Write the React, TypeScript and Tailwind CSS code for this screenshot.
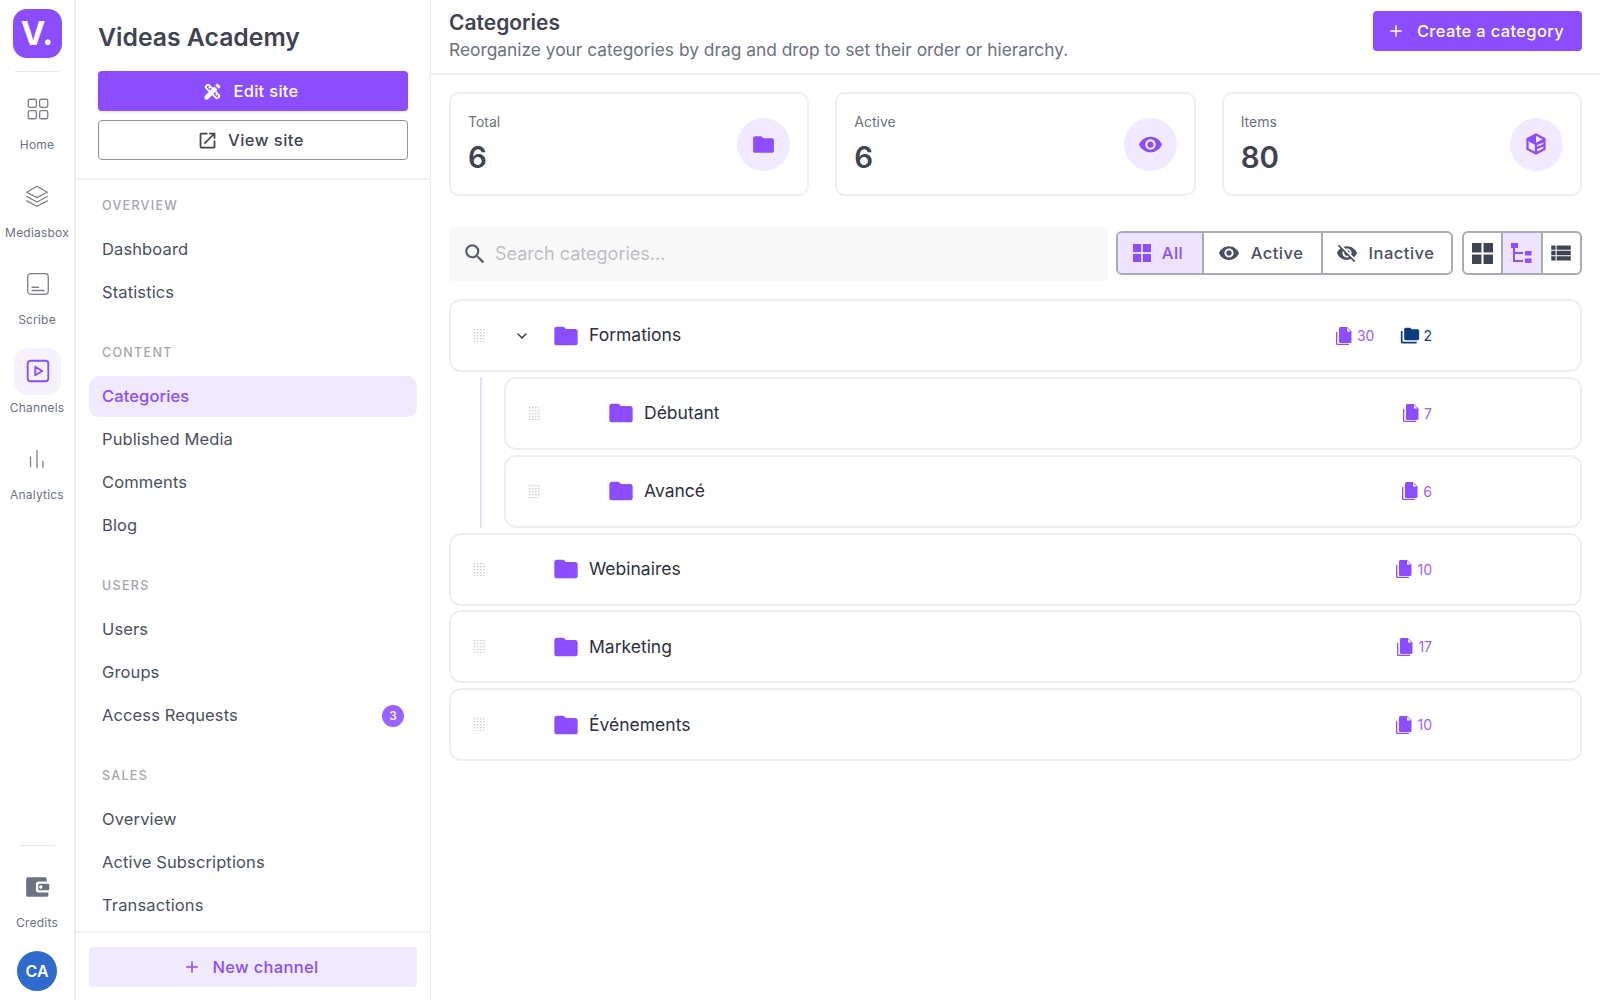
import type { ReactNode } from "react";
import {
  MdDesignServices,
  MdFolder,
  MdFolderCopy,
  MdOutlineOpenInNew,
  MdSearch,
  MdViewList,
  MdVisibility,
  MdVisibilityOff,
} from "react-icons/md";
import { Plus, ChevronDown } from "lucide-react";

const font = { fontFamily: "Inter, 'Liberation Sans', sans-serif" };

function RailIcon({ children }: { children: ReactNode }) {
  return (
    <svg width="26" height="26" viewBox="0 0 24 24" fill="none" stroke="currentColor" strokeWidth="1.2" strokeLinecap="round" strokeLinejoin="round">
      {children}
    </svg>
  );
}

function RailItem({ label, icon, active }: { label: string; icon: ReactNode; active?: boolean }) {
  return (
    <div className="flex h-[87.5px] flex-col items-center">
      <div className={`ml-px flex h-[47px] w-[47px] items-center justify-center rounded-[14px] ${active ? "bg-[#f5f1ff] text-[#8b4dff]" : "text-[#7b7e88]"}`}>{icon}</div>
      <span className="mt-[5px] text-[12px] leading-[16px] tracking-[0.2px] text-[#6b7280]">{label}</span>
    </div>
  );
}

function NavItem({ label, active, badge }: { label: string; active?: boolean; badge?: string }) {
  return (
    <div className={`flex h-[41px] items-center justify-between rounded-[10px] px-[13px] text-[16.5px] tracking-[0.12px] ${active ? "bg-[#f0e9ff] font-medium text-[#8b4dff]" : "text-[#4b5060]"}`}>
      <span>{label}</span>
      {badge && <span className="flex h-[22px] w-[22px] items-center justify-center rounded-full bg-[#9a62ff] text-[12px] font-medium text-white">{badge}</span>}
    </div>
  );
}

function NavGroup({ title, items }: { title: string; items: string[] }) {
  return (
    <div className="mb-[26px]">
      <div className="mb-[10px] h-[27px] px-[13px] text-[12.5px] font-medium leading-[27px] tracking-[1.3px] text-[#a3a5ad]">{title}</div>
      <div className="flex flex-col gap-[2px]">
        {items.map((item) => (
          <NavItem key={item} label={item} active={item === "Categories"} badge={item === "Access Requests" ? "3" : undefined} />
        ))}
      </div>
    </div>
  );
}

function StatCard({ label, value, icon }: { label: string; value: string; icon: ReactNode }) {
  return (
    <div className="flex h-[104px] flex-1 items-center justify-between rounded-[10px] border-2 border-[#eeeeef] pl-[17px] pr-[17px]">
      <div>
        <div className="text-[14px] leading-[20px] text-[#6b7280]">{label}</div>
        <div className="mt-[6px] text-[29.5px] font-semibold leading-[38px] text-[#404452]">{value}</div>
      </div>
      <div className="flex h-[53px] w-[53px] items-center justify-center rounded-full bg-[#f0e9ff] text-[#8b4dff]">{icon}</div>
    </div>
  );
}

function Grip() {
  return (
    <svg width="11" height="13" viewBox="0 0 11 13" fill="#cfd0d4">
      {[0, 3, 6, 9].map((x) => [0, 3, 6, 9, 12].map((y) => <rect key={`${x}-${y}`} x={x} y={y} width="1.6" height="1.4" />))}
    </svg>
  );
}

function DocsIcon() {
  return (
    <svg width="16" height="18" viewBox="0 0 16 18" className="text-[#8b4dff]">
      <path fill="currentColor" d="M0 5h1.300v11.700H13V18H1.500Q0 18 0 16.500z" />
      <path fill="currentColor" d="M4.200 0h6.800l4.500 4.500v10Q15.500 16 14 16H4.200Q3 16 3 14.500v-13Q3 0 4.200 0z" />
      <path fill="#fff" d="M11 1v3.500h3.500z" />
    </svg>
  );
}

function Row({ name, count, sub, expanded }: { name: string; count: string; sub?: string; expanded?: boolean }) {
  return (
    <div className="flex h-[73px] items-center rounded-[12px] border-2 border-[#eeeeef] pl-[23px] pr-[148px]">
      <Grip />
      <div className="ml-[29px] flex w-[41px] items-center text-[#2d3140]">{expanded && <ChevronDown size={16} strokeWidth={2} />}</div>
      <MdFolder size={28} className="-ml-[3px] text-[#8b4dff]" />
      <span className="ml-[9px] text-[17.5px] text-[#2d3140]">{name}</span>
      <div className="ml-auto flex items-center gap-[26px] text-[14px]">
        <div className="flex items-center gap-[5px] text-[#9a62ff]">
          <DocsIcon />
          <span>{count}</span>
        </div>
        {sub && (
          <div className="flex items-center gap-[3px] text-[#0b3b80]">
            <MdFolderCopy size={20} />
            <span>{sub}</span>
          </div>
        )}
      </div>
    </div>
  );
}

function Segment({ icon, label, active, width }: { icon: ReactNode; label: string; active?: boolean; width: string }) {
  return (
    <div className={`flex h-full items-center justify-center gap-[11px] border-r-2 border-[#a9abb2] pr-[4px] text-[16.5px] font-medium tracking-[0.5px] last:border-r-0 ${width} ${active ? "bg-[#ede3ff] text-[#8b4dff]" : "text-[#4b5060]"}`}>
      {icon}
      <span>{label}</span>
    </div>
  );
}

function Squares({ size }: { size: number }) {
  return (
    <svg width={size} height={size} viewBox="0 0 20 20" fill="currentColor">
      <rect x="0" y="0" width="9" height="9" />
      <rect x="11" y="0" width="9" height="9" />
      <rect x="0" y="11" width="9" height="9" />
      <rect x="11" y="11" width="9" height="9" />
    </svg>
  );
}

function TreeIcon() {
  return (
    <svg width="24" height="24" viewBox="0 0 24 24" fill="currentColor">
      <rect x="1" y="2" width="7" height="5" />
      <rect x="3" y="7" width="2" height="14" />
      <rect x="3" y="11" width="10" height="2" />
      <rect x="3" y="19" width="10" height="2" />
      <rect x="15" y="10" width="6.500" height="4.500" />
      <rect x="15" y="17.500" width="6.500" height="4.500" />
    </svg>
  );
}

export default function App() {
  return (
    <div className="flex h-[1000px] w-[1600px] overflow-hidden bg-white" style={font}>
      {/* icon rail */}
      <aside className="flex w-[76px] shrink-0 flex-col items-center border-r-2 border-[#ececee]">
        <div className="mt-[9px] flex h-[49px] w-[49px] items-center justify-center rounded-[14px] bg-[#8b4dff] text-[33px] font-bold text-white">V.</div>
        <div className="mb-[13px] mt-[13px] h-px w-[45px] bg-[#e5e5e8]" />
        <RailItem
          label="Home"
          icon={
            <RailIcon>
              <rect x="3" y="3" width="7.500" height="7.500" rx="1.500" />
              <rect x="13.500" y="3" width="7.500" height="7.500" rx="1.500" />
              <rect x="3" y="13.500" width="7.500" height="7.500" rx="1.500" />
              <rect x="13.500" y="13.500" width="7.500" height="7.500" rx="1.500" />
            </RailIcon>
          }
        />
        <RailItem
          label="Mediasbox"
          icon={
            <RailIcon>
              <path d="M12 3 2.500 8.500 12 13.500l9.500-5z" />
              <path d="m2.500 12.500 9.500 5 9.500-5" />
              <path d="m2.500 16.500 9.500 5 9.500-5" />
            </RailIcon>
          }
        />
        <RailItem
          label="Scribe"
          icon={
            <RailIcon>
              <rect x="2.500" y="2.500" width="19" height="19" rx="3" />
              <path d="M6.500 15h6M6.500 18h11" />
            </RailIcon>
          }
        />
        <RailItem
          label="Channels"
          active
          icon={
            <RailIcon>
              <rect x="2.500" y="2.500" width="19" height="19" rx="2.500" strokeWidth="1.700" />
              <path d="M9.500 8v8l6.500-4z" strokeWidth="1.700" />
            </RailIcon>
          }
        />
        <RailItem
          label="Analytics"
          icon={
            <RailIcon>
              <path d="M6 10v9M12 4v16M17.500 14v5.500" />
            </RailIcon>
          }
        />
        <div className="mt-auto mb-[28px] h-px w-[36px] bg-[#e5e5e8]" />
        <div className="flex flex-col items-center text-[#6b7280]">
          <svg width="26" height="26" viewBox="0 0 24 24" fill="currentColor">
            <path fillRule="evenodd" d="M3.500 3h16Q21 3 21 4.500V7h-7.500Q11 7 11 9.500v5Q11 17 13.500 17H22.500v2.500Q22.500 21 21 21H3.500Q2 21 2 19.500v-15Q2 3 3.500 3zM14 9h8.500q.8 0 .8.800v4.400q0 .8-.8.800H14q-.8 0-.8-.8V9.800Q13.200 9 14 9zm3 3a1.500 1.500 0 1 0 0 .010z" />
          </svg>
          <span className="mt-[15px] text-[12px] leading-[16px] tracking-[0.2px]">Credits</span>
        </div>
        <div className="mb-[9px] mt-[20px] flex h-[40px] w-[40px] items-center justify-center rounded-full bg-[#2f6bcc] text-[16px] font-semibold text-white">CA</div>
      </aside>

      {/* nav panel */}
      <nav className="flex w-[355px] shrink-0 flex-col border-r border-[#ececee]">
        <div className="border-b-2 border-[#f1f1f3] px-[22px] pb-[18px] pt-[19px]">
          <h1 className="text-[24.75px] font-semibold leading-[37px] text-[#404452]">Videas Academy</h1>
          <button className="mt-[15px] flex h-[40px] w-full items-center justify-center gap-[10px] rounded-[4px] bg-[#8b4dff] pr-[5px] text-[16.5px] font-medium tracking-[0.3px] text-white shadow-sm">
            <MdDesignServices size={21} />
            Edit site
          </button>
          <button className="mt-[9px] flex h-[40px] w-full items-center justify-center gap-[10px] rounded-[4px] border border-[#8e9099] pr-[5px] text-[16.5px] font-medium tracking-[0.5px] text-[#404452]">
            <MdOutlineOpenInNew size={21} />
            View site
          </button>
        </div>
        <div className="flex-1 overflow-hidden px-[13px] pt-[12px]">
          <NavGroup title="OVERVIEW" items={["Dashboard", "Statistics"]} />
          <NavGroup title="CONTENT" items={["Categories", "Published Media", "Comments", "Blog"]} />
          <NavGroup title="USERS" items={["Users", "Groups", "Access Requests"]} />
          <NavGroup title="SALES" items={["Overview", "Active Subscriptions", "Transactions"]} />
        </div>
        <div className="border-t-2 border-[#f1f1f3] px-[13px] pb-[13px] pt-[14px]">
          <button className="flex h-[40px] w-full items-center justify-center gap-[12px] rounded-[4px] bg-[#f0e9ff] pr-[5px] text-[16.5px] font-medium tracking-[0.3px] text-[#8b4dff]">
            <Plus size={18} />
            New channel
          </button>
        </div>
      </nav>

      {/* main */}
      <main className="flex min-w-0 flex-1 flex-col">
        <header className="flex h-[75px] shrink-0 items-start justify-between border-b-2 border-[#ececee] pl-[18px] pr-[18px] pt-[8px]">
          <div>
            <h2 className="text-[21px] font-semibold leading-[30px] text-[#404452]">Categories</h2>
            <p className="text-[17.35px] leading-[24px] text-[#6b7280]">Reorganize your categories by drag and drop to set their order or hierarchy.</p>
          </div>
          <button className="mt-[3px] flex h-[40px] w-[209px] items-center justify-center gap-[12px] rounded-[4px] bg-[#8b4dff] pr-[4px] text-[16.5px] font-medium tracking-[0.35px] text-white">
            <Plus size={18} />
            Create a category
          </button>
        </header>

        <div className="flex flex-col px-[18px] pt-[17px]">
          <div className="flex gap-[26px]">
            <StatCard label="Total" value="6" icon={<MdFolder size={25} />} />
            <StatCard label="Active" value="6" icon={<MdVisibility size={25} />} />
            <StatCard
              label="Items"
              value="80"
              icon={
                <svg width="24" height="24" viewBox="0 0 24 24" fill="none" stroke="currentColor" strokeWidth="2.300" strokeLinejoin="round">
                  <path d="M12 2.500 3.500 7v10l8.500 4.500 8.500-4.500V7z" />
                  <path d="M3.500 7.500 12 12l8.500-4.500M12 12v9.500M13 12l7-3M13 16l7-3" />
                  <path fill="currentColor" stroke="none" d="M12 2.500 4 7l8 4.500z" />
                </svg>
              }
            />
          </div>

          <div className="mt-[31px] flex h-[54px] items-center">
            <div className="flex h-full flex-1 items-center rounded-[4px] bg-[#f8f8f9] pb-[1px] pl-[13px]">
              <MdSearch size={26} className="text-[#5a5e6b]" />
              <span className="ml-[7px] text-[18px] text-[#bdbec4]">Search categories...</span>
            </div>
            <div className="mb-[2px] ml-[8px] flex h-[44px] w-[337px] overflow-hidden rounded-[6px] border-2 border-[#a9abb2]">
              <Segment width="w-[86px]" active icon={<Squares size={18} />} label="All" />
              <Segment width="w-[119px]" icon={<MdVisibility size={22} />} label="Active" />
              <Segment width="flex-1" icon={<MdVisibilityOff size={22} />} label="Inactive" />
            </div>
            <div className="mb-[2px] ml-[9px] flex h-[44px] w-[120px] overflow-hidden rounded-[6px] border-2 border-[#a9abb2] text-[#404452]">
              <div className="flex flex-1 items-center justify-center border-r-2 border-[#a9abb2]"><Squares size={21} /></div>
              <div className="flex flex-1 items-center justify-center border-r-2 border-[#a9abb2] bg-[#ede3ff] text-[#8b4dff]"><TreeIcon /></div>
              <div className="flex flex-1 items-center justify-center"><MdViewList size={26} /></div>
            </div>
          </div>

          <div className="mt-[18px] flex flex-col gap-[4.85px]">
            <Row name="Formations" count="30" sub="2" expanded />
            <div className="flex gap-[22px] pl-[31px]">
              <div className="w-[2px] bg-[#e7dfff]" />
              <div className="flex flex-1 flex-col gap-[4.85px]">
                <Row name="Débutant" count="7" />
                <Row name="Avancé" count="6" />
              </div>
            </div>
            <Row name="Webinaires" count="10" />
            <Row name="Marketing" count="17" />
            <Row name="Événements" count="10" />
          </div>
        </div>
      </main>
    </div>
  );
}
